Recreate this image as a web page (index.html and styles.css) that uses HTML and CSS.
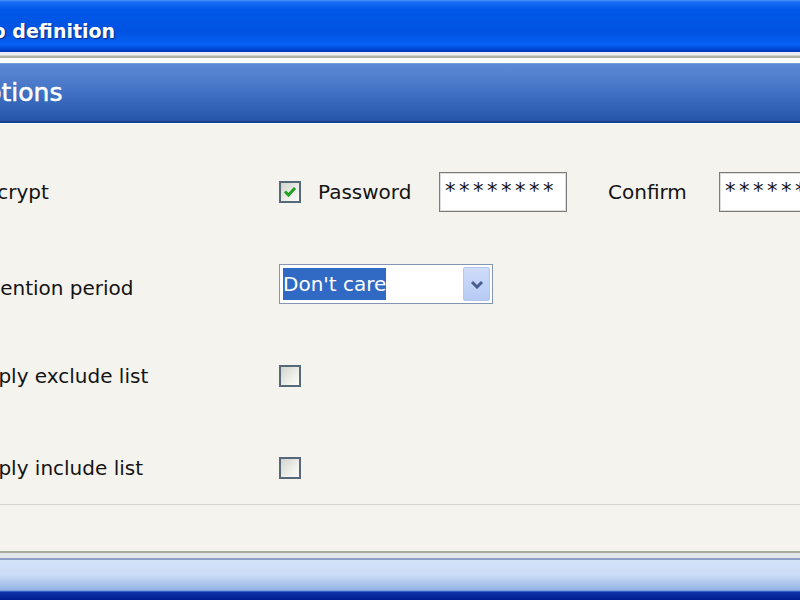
FILE: index.html
```html
<!DOCTYPE html>
<html lang="en">
  <head>
    <meta charset="UTF-8" />
    <meta name="viewport" content="width=device-width, initial-scale=1.0" />
    <title>Job definition</title>
    <link rel="stylesheet" href="styles.css">
  </head>
  <body>
    <div id="window">
      <div class="title-bar"><span class="title-text">Job definition</span></div>
      <div class="title-sep"></div>
      <div class="section-head"><span class="section-text">Options</span></div>

      <div class="section-body">
        <div class="rows">
          <div class="row">
            <span class="label">Encrypt</span>
            <span class="check">
              <svg width="18" height="18" viewBox="0 0 18 18"><path d="M4 8.5 L7.5 12 L14 5" fill="none" stroke="#21a121" stroke-width="3" /></svg>
            </span>
            <span class="ctl-label">Password</span>
            <input type="text" class="pw" value="********" readonly />
            <span class="ctl-label confirm">Confirm</span>
            <input type="text" class="pw" value="********" readonly />
          </div>

          <div class="row">
            <span class="label period">Retention period</span>
            <div class="combo">
              <span class="combo-value">Don't care</span>
              <span class="combo-btn">
                <svg width="14" height="9" viewBox="0 0 14 9"><polyline points="2,2 7,7 12,2" fill="none" stroke="#4a5f8c" stroke-width="3" /></svg>
              </span>
            </div>
          </div>

          <div class="row">
            <span class="label">Apply exclude list</span>
            <span class="check"></span>
          </div>

          <div class="row">
            <span class="label">Apply include list</span>
            <span class="check"></span>
          </div>
        </div>
      </div>

      <div class="section-foot"></div>
      <div class="bottom-bar"></div>
    </div>
  </body>
</html>
```

FILE: styles.css
```css
body {
  margin: 0;
  padding: 0;
  overflow: hidden;
  font-family: "DejaVu Sans", Verdana, sans-serif;
  background-color: #f4f3ee;
  color: #141414;
}

#window {
  width: 800px;
  height: 600px;
  display: flex;
  flex-direction: column;
  overflow: hidden;
}

/* window caption */
.title-bar {
  height: 52px;
  box-sizing: border-box;
  padding-top: 9px;
  display: flex;
  align-items: center;
  background-image: linear-gradient(#4a95fa 0, #1a6cf4 4%, #0058e8 18%, #0053e2 60%, #0660f4 86%, #0048d4 94%, #0036b6 100%);
}

.title-text {
  margin-left: -28px;
  color: #ffffff;
  font-weight: bold;
  font-size: 19px;
  white-space: nowrap;
  text-shadow: 1px 1px 1px #0a2a85;
}

.title-sep {
  height: 11px;
  background-image: linear-gradient(#e6ebf4 0, #eef0f2 3px, #b4b0a4 4px, #b4b0a4 6px, #ffffff 6px, #ffffff 11px);
}

/* section header */
.section-head {
  height: 60px;
  box-sizing: border-box;
  display: flex;
  align-items: center;
  border-top: 1px solid #7aa0dc;
  border-bottom: 2px solid #163f8a;
  background-image: linear-gradient(#5d8ad5, #4474c6 45%, #2555a8);
}

.section-text {
  margin-left: -34px;
  color: #ffffff;
  font-size: 25px;
  white-space: nowrap;
  -webkit-text-stroke: 0.5px #ffffff;
}

.section-body {
  border-top: 1px solid #ffffff;
  border-bottom: 1px solid #d5d4ca;
  padding: 48px 0 16px 0;
}

.rows {
  margin-left: -28px;
  display: flex;
  flex-direction: column;
  gap: 52px;
}

.row {
  height: 40px;
  display: flex;
  align-items: center;
  font-size: 20px;
  white-space: nowrap;
}

.label {
  width: 307px;
  flex: none;
}

.label.period {
  padding-top: 7px;
  text-indent: -5px;
}

.check {
  width: 22px;
  height: 22px;
  box-sizing: border-box;
  flex: none;
  border: 2px solid #56687a;
  background-image: linear-gradient(135deg, #d4d4ce, #f2f2ee 70%, #fbfbf9);
  display: flex;
  align-items: center;
  justify-content: center;
}

.ctl-label {
  margin-left: 17px;
  width: 121px;
  flex: none;
}

.ctl-label.confirm {
  margin-left: 41px;
  width: 111px;
}

.pw {
  width: 128px;
  height: 40px;
  box-sizing: border-box;
  flex: none;
  margin: 0;
  padding: 0 0 2px 5px;
  border: 1px solid #7c7c78;
  box-shadow: inset 0 0 0 1px #dcdcd8;
  background-color: #ffffff;
  font-family: "DejaVu Sans", Verdana, sans-serif;
  font-size: 21px;
  letter-spacing: 3.5px;
  color: #111;
  outline: none;
}

/* combo box */
.combo {
  width: 214px;
  height: 40px;
  box-sizing: border-box;
  flex: none;
  padding: 2px 2px 2px 3px;
  border: 1px solid #8395b0;
  background-color: #ffffff;
  display: flex;
  align-items: center;
  justify-content: space-between;
}

.combo-value {
  height: 32px;
  line-height: 32px;
  background-color: #316ac5;
  color: #ffffff;
  font-size: 20px;
}

.combo-btn {
  width: 27px;
  height: 34px;
  box-sizing: border-box;
  border: 1px solid #b3c6ee;
  border-radius: 2px;
  background-image: linear-gradient(#cfdcf9, #b6cbf4);
  display: flex;
  align-items: center;
  justify-content: center;
}

.section-foot {
  height: 46px;
}

.bottom-bar {
  flex: 1;
  background-image: linear-gradient(#a3ac9b 0, #a3ac9b 2px, #e0e6ea 2px, #e0e6ea 7px, #8d9fc6 7px, #8d9fc6 9px, #d2e2f9 9px, #cbdcf6 24px, #93b3e5 39px, #5b88d8 40px, #0c34a8 41px, #001c90 49px);
}
```
